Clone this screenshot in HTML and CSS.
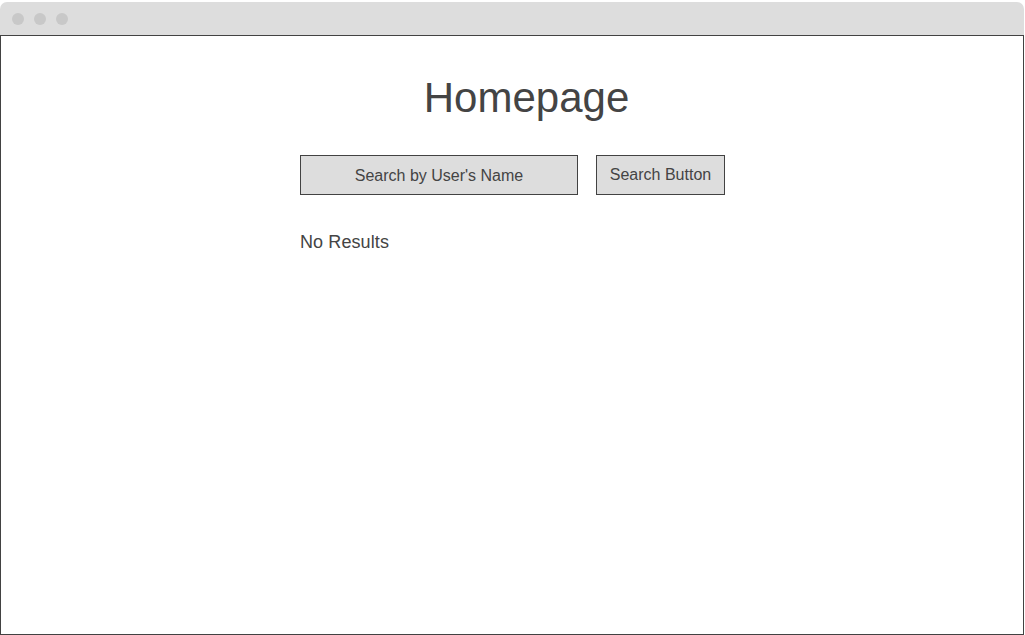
FILE: index.html
```html
<!DOCTYPE html>
<html>
<head>
<meta charset="utf-8">
<link rel="stylesheet" href="styles.css">
</head>
<body>
<div class="window">
  <div class="titlebar">
    <span class="dot"></span><span class="dot"></span><span class="dot"></span>
  </div>
  <div class="content">
    <div class="column">
      <h1 class="title">Homepage</h1>
      <div class="search-row">
        <div class="search-input">Search by User's Name</div>
        <div class="search-button">Search Button</div>
      </div>
      <p class="results">No Results</p>
    </div>
  </div>
</div>
</body>
</html>
```

FILE: styles.css
```css
html, body {
  margin: 0;
  padding: 0;
  background: #ffffff;
}
body {
  font-family: "Liberation Sans", Arial, sans-serif;
  color: #444444;
}
.window {
  width: 1024px;
  height: 635px;
  display: flex;
  flex-direction: column;
}
.titlebar {
  margin-top: 2px;
  height: 33px;
  background: #dddddd;
  border-radius: 7px 7px 0 0;
  display: flex;
  align-items: center;
  gap: 10px;
  padding-left: 12px;
  box-sizing: border-box;
  flex: none;
}
.dot {
  width: 12px;
  height: 12px;
  border-radius: 50%;
  background: #c8c8c8;
}
.content {
  flex: 1;
  border: 1px solid #424242;
  box-sizing: border-box;
  padding-left: 299px;
}
.column {
  width: 425px;
  display: flex;
  flex-direction: column;
}
.title {
  margin: 38px 0 0 0;
  padding-left: 28px;
  text-align: center;
  font-size: 42px;
  line-height: 48px;
  font-weight: normal;
  color: #444444;
}
.search-row {
  margin-top: 33px;
  display: flex;
  gap: 18px;
}
.search-input, .search-button {
  height: 40px;
  box-sizing: border-box;
  border: 1px solid #424242;
  background: #dddddd;
  display: flex;
  align-items: center;
  justify-content: center;
  font-size: 16px;
  color: #444444;
}
.search-input {
  width: 278px;
  padding-top: 2px;
}
.search-button {
  width: 129px;
}
.results {
  margin: 37px 0 0 0;
  font-size: 18px;
  line-height: 21px;
  letter-spacing: 0.1px;
  color: #444444;
}
```
